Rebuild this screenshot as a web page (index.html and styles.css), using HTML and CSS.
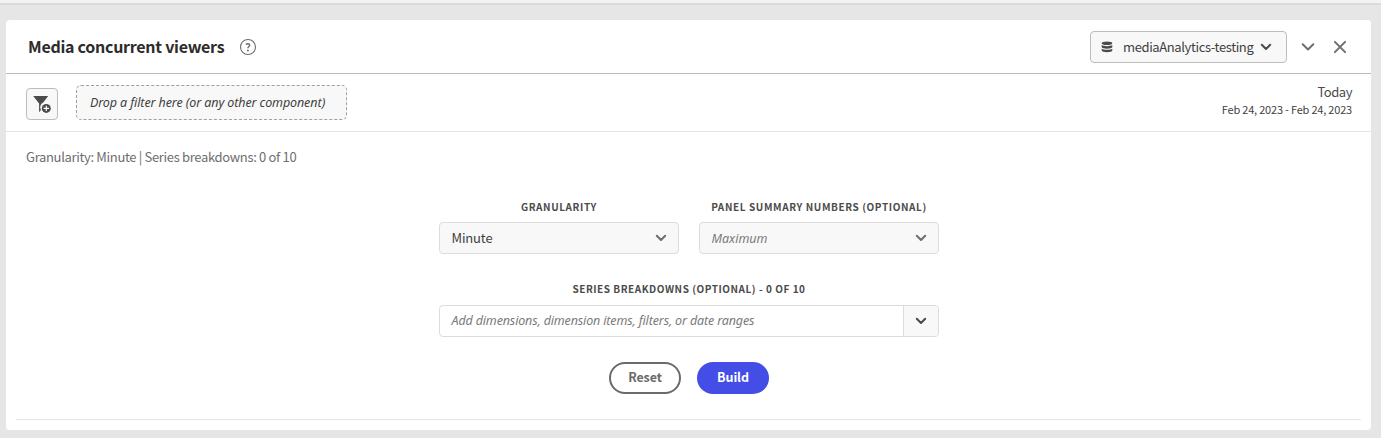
FILE: index.html
```html
<!DOCTYPE html>
<html lang="en">
<head>
<meta charset="utf-8">
<title>Media concurrent viewers</title>
<link rel="stylesheet" href="styles.css">
</head>
<body>
<div class="topbar"></div>
<main class="panel">
  <header class="panel-header">
    <h1 class="title"><span>Media concurrent viewers</span></h1>
    <svg class="help" width="18" height="18" viewBox="0 0 18 18"><circle cx="9" cy="9" r="7.5" fill="none" stroke="#6e6e6e" stroke-width="1.1"/><path d="M6.9 6.5C7.6 5.5 10.7 5.1 10.7 7.2C10.7 8.5 8.9 8.6 8.9 10.3" fill="none" stroke="#6e6e6e" stroke-width="1.4"/><circle cx="8.9" cy="12.4" r="1" fill="#6e6e6e"/></svg>
    <button class="suite">
      <svg width="12" height="12" viewBox="0 0 12 12" fill="#4b4b4b"><ellipse cx="6" cy="2.3" rx="5.3" ry="1.8"/><path d="M.7 4.1C2.5 5.5 9.5 5.5 11.3 4.1V6.2C11.3 8.1 .7 8.1 .7 6.2Z"/><path d="M.7 7.7C2.5 9.1 9.5 9.1 11.3 7.7V9.6C11.3 11.7 .7 11.7 .7 9.6Z"/></svg>
      <span class="suite-name">mediaAnalytics-testing</span>
      <svg class="chevron dark" width="12" height="8" viewBox="0 0 12 8"><path d="M1.8 1.8L6 6L10.2 1.8"/></svg>
    </button>
    <svg class="chevron collapse" width="14" height="10" viewBox="0 0 14 10"><path d="M1.7 2.2L7 7.5L12.3 2.2"/></svg>
    <svg class="chevron close" width="14" height="14" viewBox="0 0 14 14"><path d="M1.9 1.9L12.1 12.1M12.1 1.9L1.9 12.1"/></svg>
  </header>
  <section class="filter-bar">
    <button class="filter-button"><svg width="20" height="20" viewBox="0 0 20 20"><path d="M1.2 2H16.2L11.2 8.5A5.2 5.2 0 0 0 9 16L7.1 18.3V9.4Z" fill="#4b4b4b"/><circle cx="14.3" cy="14.4" r="4.5" fill="#4b4b4b"/><path d="M14.3 11.7V17.1M11.6 14.4H17" stroke="#fff" stroke-width="1.2"/></svg></button>
    <div class="drop-zone"><span class="drop-text">Drop a filter here (or any other component)</span></div>
    <div class="date"><span class="today">Today</span><span class="range">Feb 24, 2023 - Feb 24, 2023</span></div>
  </section>
  <section class="content">
    <p class="summary"><span>Granularity: Minute | Series breakdowns: 0 of 10</span></p>
    <form class="form">
      <div class="row">
        <div class="field"><label class="label">GRANULARITY</label>
          <div class="select"><span class="value">Minute</span><svg class="chevron" width="12" height="8" viewBox="0 0 12 8"><path d="M1.8 1.8L6 6L10.2 1.8"/></svg></div></div>
        <div class="field"><label class="label">PANEL SUMMARY NUMBERS (OPTIONAL)</label>
          <div class="select"><span class="placeholder maximum">Maximum</span><svg class="chevron" width="12" height="8" viewBox="0 0 12 8"><path d="M1.8 1.8L6 6L10.2 1.8"/></svg></div></div>
      </div>
      <div class="field series"><label class="label">SERIES BREAKDOWNS (OPTIONAL) - 0 OF 10</label>
        <div class="combo"><span class="placeholder">Add dimensions, dimension items, filters, or date ranges</span><div class="combo-toggle"><svg class="chevron dark" width="12" height="8" viewBox="0 0 12 8"><path d="M1.8 1.8L6 6L10.2 1.8"/></svg></div></div>
      </div>
      <div class="actions"><button type="button" class="pill reset">Reset</button><button type="button" class="pill build">Build</button></div>
    </form>
    <div class="rule"></div>
  </section>
</main>
</body>
</html>
```
FILE: styles.css
```css
* { box-sizing: border-box; }
body {
  margin: 0;
  height: 438px;
  overflow: hidden;
  background: #e6e6e6;
  font: 13px/18px "Noto Sans CJK SC", "Open Sans", sans-serif;
  color: #4b4b4b;
}
button { font: inherit; color: inherit; padding: 0; }
svg { display: block; flex: none; }
span { white-space: nowrap; }
.topbar { height: 5px; background: #f3f3f3; border-bottom: 2px solid #dadada; }
.panel {
  margin: 15px 10px 0 6px;
  height: 410px;
  background: #fff;
  border-radius: 4px;
}
.panel-header {
  height: 54px;
  padding: 0 24px 0 22px;
  display: flex;
  align-items: center;
  border-bottom: 1px solid #bcbcbc;
}
.title { margin: 0; padding-bottom: 2px; width: 211px; font-size: 16px; line-height: 24px; font-weight: 700; color: #2c2c2c; letter-spacing: -0.27px; }
.suite {
  margin-left: auto;
  width: 197px;
  height: 32px;
  padding: 0 13px 0 10px;
  display: flex;
  align-items: center;
  background: #f8f8f8;
  border: 1px solid #bcbcbc;
  border-radius: 4px;
}
.suite-name { margin: 0 auto 0 10px; letter-spacing: -0.38px; color: #3f3f3f; }
.suite .chevron { margin-right: 1px; }
.chevron { fill: none; stroke: #6e6e6e; stroke-width: 2; stroke-linecap: round; stroke-linejoin: round; }
.chevron.dark { stroke: #4b4b4b; }
.collapse { margin-left: 14px; }
.close { margin-left: 18px; }
.filter-bar {
  height: 58px;
  padding: 0 19px 0 20px;
  display: flex;
  border-bottom: 1px solid #e4e4e4;
}
.filter-button {
  margin-top: 14px;
  width: 32px;
  height: 32px;
  display: grid;
  place-items: center;
  border: 1px solid #bcbcbc;
  border-radius: 4px;
  background: #f8f8f8;
}
.drop-zone {
  margin: 11px 0 0 18px;
  width: 271px;
  height: 35px;
  padding-left: 13px;
  display: flex;
  align-items: center;
  background: #f8f8f8;
  border: 1px dashed #a0a0a0;
  border-radius: 5px;
}
.drop-text, .placeholder { font-family: "Noto Sans", sans-serif; font-style: italic; font-size: 12.5px; }
.drop-text { letter-spacing: -0.1px; color: #3f3f3f; }
.date { margin: 9px 0 0 auto; display: flex; flex-direction: column; align-items: flex-end; }
.today { letter-spacing: -0.45px; }
.range { font-size: 11px; line-height: 16px; letter-spacing: -0.2px; color: #3f3f3f; }
.content { padding: 16px 10px 0; }
.summary { margin: 0 10px; color: #6e6e6e; letter-spacing: -0.33px; }
.form { width: 500px; margin: 34px 0 0 423px; }
.row { display: flex; gap: 20px; }
.field { flex: 1; text-align: center; }
.label { display: block; height: 14px; font-size: 10px; line-height: 14px; font-weight: 700; letter-spacing: 0.6px; white-space: nowrap; }
.series .label { letter-spacing: 0.53px; }
.select {
  margin-top: 8px;
  height: 32px;
  padding: 0 11px 0 11.5px;
  display: flex;
  align-items: center;
  justify-content: space-between;
  border: 1px solid #dcdcdc;
  border-radius: 4px;
  background: #f8f8f8;
}
.value { letter-spacing: -0.15px; color: #3f3f3f; }
.placeholder { color: #7a7a7a; letter-spacing: -0.14px; }
.maximum { padding-top: 1px; letter-spacing: 0; }
.series { margin-top: 28px; }
.combo {
  margin-top: 9px;
  height: 32px;
  padding-left: 11.5px;
  display: flex;
  align-items: center;
  justify-content: space-between;
  border: 1px solid #dcdcdc;
  border-radius: 4px;
}
.combo-toggle { width: 35px; height: 30px; display: grid; place-items: center; border-left: 1px solid #dcdcdc; background: #f8f8f8; border-radius: 0 3px 3px 0; }
.actions { margin-top: 25px; display: flex; justify-content: center; gap: 16px; }
.pill { width: 72px; height: 32px; padding-bottom: 2px; border-radius: 16px; font-weight: 700; font-size: 12.5px; letter-spacing: -0.1px; }
.reset { border: 2px solid #6b6b6b; background: #fff; color: #6b6b6b; }
.build { border: 0; background: #444de5; color: #fff; }
.rule { margin-top: 25px; height: 1px; background: #e6e6e6; }
```
